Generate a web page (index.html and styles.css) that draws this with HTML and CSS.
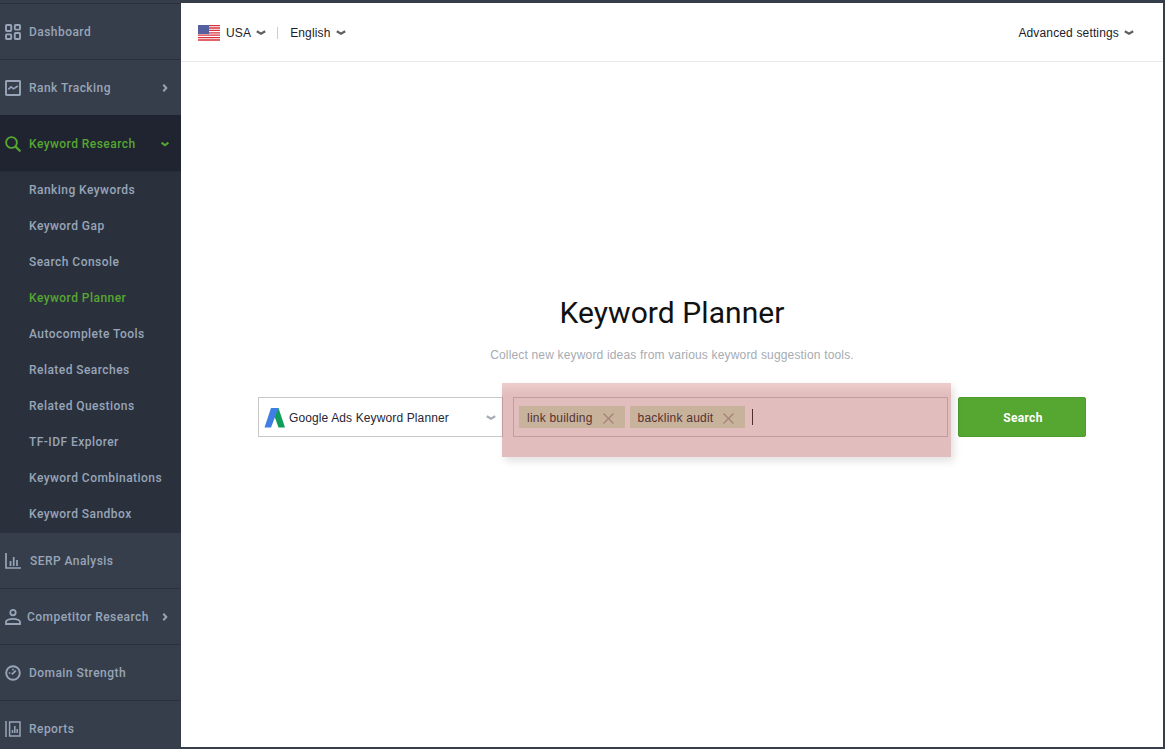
FILE: index.html
```html
<!DOCTYPE html>
<html lang="en">
<head>
<meta charset="utf-8">
<title>Keyword Planner</title>
<link rel="stylesheet" href="styles.css">
</head>
<body>
<div class="app">
  <nav class="sidebar">
    <a class="nav-item">
      <svg class="nav-icon" viewBox="0 0 16 16"><g fill="none" stroke="currentColor" stroke-width="1.9"><rect x="1" y="1" width="5.200" height="6" rx=".8"/><rect x="9.800" y="1" width="5.200" height="4.600" rx=".8"/><rect x="1" y="10.400" width="5.200" height="4.600" rx=".8"/><rect x="9.800" y="9" width="5.200" height="6" rx=".8"/></g></svg>
      <span class="nav-label">Dashboard</span>
    </a>
    <a class="nav-item">
      <svg class="nav-icon" viewBox="0 0 16 16"><rect x="1" y="1" width="14" height="14" rx=".5" fill="none" stroke="currentColor" stroke-width="1.900"/><path d="M3.300 9.300 6 6.800l2.600 2L12.800 6" fill="none" stroke="currentColor" stroke-width="1.600"/></svg>
      <span class="nav-label">Rank Tracking</span>
      <svg class="nav-arrow" viewBox="0 0 8 8"><path d="M2.300 .8 5.300 4 2.300 7.200" fill="none" stroke="currentColor" stroke-width="2"/></svg>
    </a>
    <a class="nav-item active">
      <svg class="nav-icon" viewBox="0 0 16 16"><circle cx="6.500" cy="6.500" r="5.400" fill="none" stroke="currentColor" stroke-width="1.900"/><path d="M10.400 10.400 15.400 15.400" stroke="currentColor" stroke-width="2.200"/></svg>
      <span class="nav-label">Keyword Research</span>
      <svg class="nav-arrow" viewBox="0 0 8 8"><path d="M.6 2.600 4 5.200 7.400 2.600" fill="none" stroke="currentColor" stroke-width="2"/></svg>
    </a>
    <div class="subnav">
      <a class="sub-item">Ranking Keywords</a>
      <a class="sub-item">Keyword Gap</a>
      <a class="sub-item">Search Console</a>
      <a class="sub-item current">Keyword Planner</a>
      <a class="sub-item">Autocomplete Tools</a>
      <a class="sub-item">Related Searches</a>
      <a class="sub-item">Related Questions</a>
      <a class="sub-item">TF-IDF Explorer</a>
      <a class="sub-item">Keyword Combinations</a>
      <a class="sub-item">Keyword Sandbox</a>
    </div>
    <a class="nav-item">
      <svg class="nav-icon" viewBox="0 0 16 16"><path d="M1 0v15h15M5.500 8v5M8.700 4v9M12 7v6" fill="none" stroke="currentColor" stroke-width="1.700"/></svg>
      <span class="nav-label label-serp">SERP Analysis</span>
    </a>
    <a class="nav-item">
      <svg class="nav-icon" viewBox="0 0 16 16"><circle cx="8" cy="3.600" r="2.700" fill="none" stroke="currentColor" stroke-width="1.800"/><path d="M1 15v-2.200c0-1.600 3-3 7-3s7 1.400 7 3V15z" fill="none" stroke="currentColor" stroke-width="1.800"/></svg>
      <span class="nav-label label-comp">Competitor Research</span>
      <svg class="nav-arrow" viewBox="0 0 8 8"><path d="M2.300 .8 5.300 4 2.300 7.200" fill="none" stroke="currentColor" stroke-width="2"/></svg>
    </a>
    <a class="nav-item">
      <svg class="nav-icon" viewBox="0 0 16 16"><circle cx="8" cy="8" r="6.800" fill="none" stroke="currentColor" stroke-width="1.900"/><path d="M6.800 9.400 10.800 5.600M3.800 8h1.600M8 3.800v1.400" fill="none" stroke="currentColor" stroke-width="1.700"/></svg>
      <span class="nav-label">Domain Strength</span>
    </a>
    <a class="nav-item">
      <svg class="nav-icon" viewBox="0 0 16 16"><path d="M1 0v16M4.600 1h10.400v14H4.600zM7.500 12V9M9.800 12V5M12.200 12V8" fill="none" stroke="currentColor" stroke-width="1.500"/></svg>
      <span class="nav-label">Reports</span>
    </a>
  </nav>

  <main class="main">
    <header class="topbar">
      <div class="top-left">
        <svg class="flag" viewBox="0 0 22 16">
          <rect width="22" height="16" fill="#fff"/>
          <path d="M0 .6h22M0 3h22M0 5.400h22M0 7.800h22M0 10.200h22M0 12.600h22M0 15h22" stroke="#d8313c" stroke-width="1.300"/>
          <rect width="11" height="9" fill="#5560a0"/>
        </svg>
        <span class="top-link">USA</span>
        <svg class="chev" viewBox="0 0 10 6"><path d="M.8 1.200 5 3.800 9.200 1.200" fill="none" stroke="#5d5f63" stroke-width="2.200"/></svg>
        <span class="top-sep"></span>
        <span class="top-link">English</span>
        <svg class="chev" viewBox="0 0 10 6"><path d="M.8 1.200 5 3.800 9.200 1.200" fill="none" stroke="#5d5f63" stroke-width="2.200"/></svg>
      </div>
      <div class="top-right">
        <span class="top-link">Advanced settings</span>
        <svg class="chev" viewBox="0 0 10 6"><path d="M.8 1.200 5 3.800 9.200 1.200" fill="none" stroke="#5d5f63" stroke-width="2.200"/></svg>
      </div>
    </header>

    <section class="content">
      <h1 class="title">Keyword Planner</h1>
      <p class="subtitle">Collect new keyword ideas from various keyword suggestion tools.</p>
      <div class="search-row">
        <div class="source">
          <svg class="ads-logo" viewBox="0 0 21 21">
            <path d="M14.500 1H7.500L14.500 20.500H21z" fill="#0f9d58"/>
            <path d="M7 1h7.500L7 20.500H.5z" fill="#3f7fe4"/>
          </svg>
          <span class="source-label">Google Ads Keyword Planner</span>
          <svg class="source-chev" viewBox="0 0 10 6"><path d="M.8 1.200 5 3.800 9.200 1.200" fill="none" stroke="#a6abb5" stroke-width="2.200"/></svg>
        </div>
        <div class="keywords">
          <span class="tag"><span>link building</span><svg class="tag-x" viewBox="0 0 11 11"><path d="M.5.5l10 10M10.500.5l-10 10" stroke="#9a9a8a" stroke-width="1.200"/></svg></span>
          <span class="tag"><span>backlink audit</span><svg class="tag-x" viewBox="0 0 11 11"><path d="M.5.5l10 10M10.500.5l-10 10" stroke="#9a9a8a" stroke-width="1.200"/></svg></span>
          <span class="caret"></span>
          <div class="highlight"></div>
        </div>
        <button class="search-btn">Search</button>
      </div>
    </section>
  </main>
</div>
</body>
</html>
```

FILE: styles.css
```css
* { box-sizing: border-box; }
html, body { margin: 0; height: 100%; overflow: hidden; }
body { background: #363e4b; font-family: "Liberation Sans", Arial, sans-serif; }

.app { display: flex; height: 749px; }

.sidebar {
  width: 181px;
  flex: none;
  height: 749px;
  overflow: hidden;
  padding-top: 3px;
  background: #363e4b;
  font-family: Roboto, "Liberation Sans", sans-serif;
  font-weight: 500;
  font-size: 12px;
  letter-spacing: .45px;
}
.nav-item {
  display: flex;
  align-items: center;
  height: 56px;
  padding: 1px 12px 0 5px;
  border-top: 1px solid #2b313c;
  color: #98a5b8;
}
.nav-icon { width: 16px; height: 16px; flex: none; color: #98a5b8; }
.nav-label { margin-left: 8px; flex: 1; white-space: nowrap; }
.label-serp { margin-left: 9px; }
.label-comp { margin-left: 6px; }
.nav-arrow { width: 8px; height: 8px; flex: none; color: #98a5b8; }
.nav-item.active { background: #1f2430; color: #56a632; border-top-color: #1f2430; }
.nav-item.active .nav-icon, .nav-item.active .nav-arrow { color: #56a632; }

.subnav {
  background: #2a313d;
  border-top: 1px solid #262c37;
}
.sub-item {
  display: flex;
  align-items: center;
  height: 36px;
  padding-left: 29px;
  color: #98a5b8;
}
.sub-item.current { color: #56a632; }

.main {
  flex: none;
  width: 982px;
  height: 744px;
  margin-top: 3px;
  background: #fff;
  display: flex;
  flex-direction: column;
}
.topbar {
  display: flex;
  justify-content: space-between;
  align-items: center;
  height: 59px;
  flex: none;
  padding: 2px 29px 0 17px;
  border-bottom: 1px solid #e9e9e9;
  font-size: 12px;
  letter-spacing: .15px;
  color: #1c1c2a;
}
.top-left, .top-right { display: flex; align-items: center; }
.flag { width: 22px; height: 16px; margin-right: 6px; }
.top-link { white-space: nowrap; }
.chev { width: 10px; height: 6px; margin-left: 5px; }
.top-sep { width: 1px; height: 12px; background: #ccc; margin: 0 12px 0 11px; }

.content {
  flex: 1;
  display: flex;
  flex-direction: column;
  align-items: center;
  padding-top: 233px;
}
.title {
  margin: 0;
  font-family: Roboto, "Liberation Sans", sans-serif;
  font-weight: 400;
  font-size: 30px;
  line-height: 36px;
  letter-spacing: .07px;
  color: #111;
}
.subtitle {
  margin: 16px 0 0;
  font-size: 12px;
  line-height: 16px;
  letter-spacing: .17px;
  color: #a6abb3;
}
.search-row {
  display: flex;
  width: 828px;
  height: 40px;
  margin-top: 34px;
  font-size: 12px;
}
.source {
  width: 245px;
  flex: none;
  display: flex;
  align-items: center;
  padding: 1px 6px 0 5px;
  border: 1px solid #c9c9c9;
  letter-spacing: .12px;
  color: #262636;
}
.ads-logo { width: 21px; height: 21px; flex: none; margin-right: 4px; }
.source-label { flex: 1; white-space: nowrap; }
.source-chev { width: 10px; height: 6px; flex: none; }
.keywords {
  position: relative;
  width: 435px;
  flex: none;
  margin-left: 10px;
  display: flex;
  align-items: center;
  gap: 5px;
  padding: 0 5px;
  border: 1px solid #c9c9c9;
  letter-spacing: .22px;
  color: #111;
}
.tag {
  display: flex;
  align-items: center;
  height: 22px;
  padding: 2px 11px 0 8px;
  background: #d5edc8;
  white-space: nowrap;
}
.tag-x { width: 11px; height: 11px; margin-left: 10px; }
.caret { width: 1px; height: 16px; background: #111; margin-left: 2px; }
.highlight {
  position: absolute;
  left: -12px;
  right: -4px;
  top: -15px;
  bottom: -21px;
  background: linear-gradient(rgba(215, 130, 130, .4), rgba(180, 90, 90, .4) 12px);
  box-shadow: 3px 4px 8px rgba(0, 0, 0, .12);
}
.search-btn {
  width: 128px;
  flex: none;
  margin-left: 10px;
  border: 1px solid #4d9a2e;
  border-radius: 2px;
  background: #56a632;
  color: #fff;
  font-family: Roboto, "Liberation Sans", sans-serif;
  font-weight: 700;
  font-size: 12px;
  letter-spacing: .3px;
  padding: 2px 0 0 2px;
}
```
